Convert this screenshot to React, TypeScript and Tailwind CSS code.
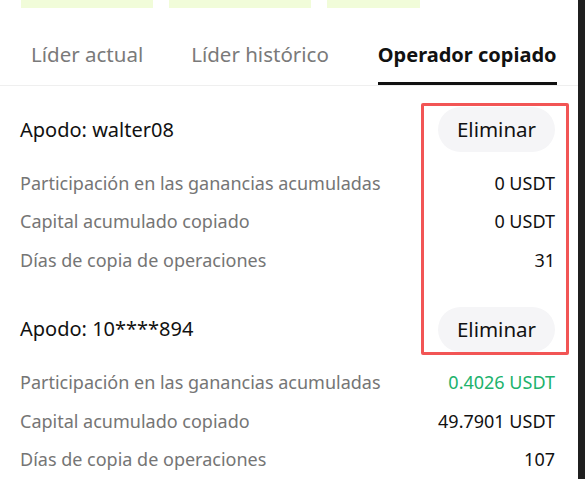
import React from "react";

type Row = { label: string; value: string; green?: boolean };

const sections: { name: string; rows: Row[] }[] = [
  {
    name: "Apodo: walter08",
    rows: [
      { label: "Participación en las ganancias acumuladas", value: "0 USDT" },
      { label: "Capital acumulado copiado", value: "0 USDT" },
      { label: "Días de copia de operaciones", value: "31" },
    ],
  },
  {
    name: "Apodo: 10****894",
    rows: [
      { label: "Participación en las ganancias acumuladas", value: "0.4026 USDT", green: true },
      { label: "Capital acumulado copiado", value: "49.7901 USDT" },
      { label: "Días de copia de operaciones", value: "107" },
    ],
  },
];

export default function App() {
  return (
    <div
      className="relative flex h-[479px] w-[585px] overflow-hidden bg-white"
      style={{ fontFamily: "'Noto Sans', Roboto, sans-serif" }}
    >
      <div className="flex w-[578px] shrink-0 flex-col">
        <div className="flex h-[8px] shrink-0 pl-[21px]">
          <div className="h-full w-[132px] bg-[#f1fcd9]" />
          <div className="ml-[16px] h-full w-[142px] bg-[#f1fcd9]" />
          <div className="ml-[16px] h-full w-[93px] bg-[#f1fcd9]" />
        </div>
        <div className="flex h-[78px] shrink-0 items-stretch border-b border-[#efefef] pl-[31px]">
          <div className="flex items-center pt-[16px] text-[20.5px] text-[#7a7a7a]">Líder actual</div>
          <div className="ml-[48px] flex items-center pt-[16px] text-[20.5px] text-[#7a7a7a]">Líder histórico</div>
          <div className="relative ml-[49px] flex items-center pt-[16px] text-[20px] font-bold text-[#111]">
            Operador copiado
            <div className="absolute bottom-0 left-0 right-0 h-[3px] bg-[#111]" />
          </div>
        </div>
        <div className="flex shrink-0 flex-col pl-[20px] pr-[23px] pt-[21px]">
          {sections.map((s, i) => (
            <div key={i} className={i > 0 ? "mt-[27px] shrink-0" : "shrink-0"}>
              <div className="flex h-[45px] items-center justify-between">
                <div className="text-[20px] text-[#111]">{s.name}</div>
                <div className="flex h-[45px] w-[117px] items-center justify-center rounded-full bg-[#f5f5f7] text-[20.5px] text-[#111]">
                  Eliminar
                </div>
              </div>
              <div className="mt-[12px] flex flex-col">
                {s.rows.map((r, j) => (
                  <div key={j} className="flex h-[38.5px] shrink-0 items-center justify-between text-[18px]">
                    <span className="text-[#757575]">{r.label}</span>
                    <span className={r.green ? "text-[#20b26c]" : "text-[#111]"}>{r.value}</span>
                  </div>
                ))}
              </div>
            </div>
          ))}
        </div>
      </div>
      <div className="h-full w-[7px] shrink-0 bg-[#1f1f1f]" />
      <div className="pointer-events-none absolute left-[421px] top-[103px] h-[252px] w-[148px] rounded-[2px] border-[3px] border-[#f25555]" />
    </div>
  );
}
